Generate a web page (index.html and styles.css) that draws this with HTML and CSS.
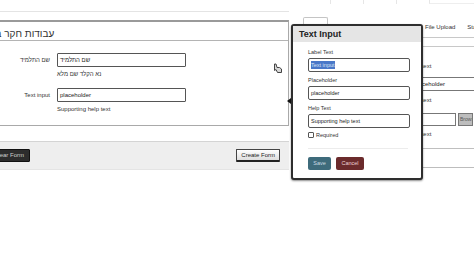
FILE: index.html
```html
<!DOCTYPE html>
<html lang="en">
<head>
<meta charset="utf-8">
<title>Form Builder</title>
<link rel="stylesheet" href="styles.css">
</head>
<body>
<div class="page">
  <div class="left-col">
    <div class="top-rule"></div>
    <section class="panel">
      <header class="panel-head"><span class="panel-title" dir="rtl">עבודות חקר במדעים</span></header>
      <div class="panel-body">
        <div class="row">
          <label class="row-label" dir="rtl">שם התלמיד</label>
          <div class="row-field">
            <div class="input"><span dir="rtl">שם התלמיד</span></div>
            <div class="help"><span dir="rtl">נא הקלד שם מלא</span></div>
          </div>
        </div>
        <div class="row">
          <label class="row-label">Text input</label>
          <div class="row-field">
            <div class="input">placeholder</div>
            <div class="help">Supporting help text</div>
          </div>
        </div>
      </div>
    </section>
    <div class="footer">
      <button class="btn-dark">Clear Form</button>
      <button class="btn-light">Create Form</button>
    </div>
  </div>

  <div class="right-col">
    <div class="strip"><span></span><span></span><span></span><span class="wide"></span></div>
    <div class="tabs">
      <span class="tab active">Text</span>
      <span class="tab">Textarea</span>
      <span class="tab">Select</span>
      <span class="tab">File Upload</span>
      <span class="tab">Static Text</span>
    </div>
    <div class="preview">
      <div class="pv-help">Supporting help text</div>
      <div class="pv-input">placeholder</div>
      <div class="pv-help">Supporting help text</div>
      <div class="pv-file"><div class="pv-file-box"></div><span class="pv-browse">Browse</span></div>
      <div class="pv-help">Supporting help text</div>
    </div>
    <div class="preview-end"></div>
  </div>
</div>

<div class="popover">
  <span class="pop-arrow"></span>
  <div class="pop-head">Text Input</div>
  <div class="pop-body">
    <div class="pop-label">Label Text</div>
    <div class="pop-input"><span class="sel">Text input</span></div>
    <div class="pop-label">Placeholder</div>
    <div class="pop-input">placeholder</div>
    <div class="pop-label">Help Text</div>
    <div class="pop-input">Supporting help text</div>
    <div class="pop-check"><span class="box"></span>Required</div>
    <div class="pop-sep"></div>
    <div class="pop-actions">
      <button class="btn-save">Save</button>
      <button class="btn-cancel">Cancel</button>
    </div>
  </div>
</div>

<svg class="cursor" width="10" height="11" viewBox="0 0 10 11">
  <path d="M1.5 1 L1.5 7.5 L3 6.5 L4.5 9.5 L8.5 9.5 L8.5 6 L6.5 4.5 L4 4.5 L3 1 Z" fill="#d8d8d8" stroke="#444" stroke-width="1" stroke-linejoin="round"/>
</svg>
</body>
</html>
```

FILE: styles.css
```css
* { box-sizing: border-box; }
html, body { margin: 0; padding: 0; }
body {
  width: 474px;
  height: 266px;
  overflow: hidden;
  background: #fff;
  font-family: "Liberation Sans", Arial, sans-serif;
  color: #222;
  position: relative;
}
.page {
  display: flex;
  align-items: flex-start;
}
.left-col {
  width: 329px;
  margin-left: -40px;
  flex: none;
}
.top-rule {
  height: 12px;
  border-bottom: 1px solid #e4e4e4;
  margin-bottom: 8px;
}
.panel {
  border: 1px solid #a9a9a9;
  border-top: 2px solid #9a9a9a;
  border-left: none;
}
.panel-head {
  height: 19px;
  border-bottom: 1px solid #b4b4b4;
  padding-left: 8px;
  line-height: 19px;
  white-space: nowrap;
  overflow: hidden;
}
.panel-title {
  font-family: "Liberation Sans", "DejaVu Sans", sans-serif;
  font-size: 10px;
  color: #333;
  display: inline-block;
}
.panel-body {
  padding: 12px 0 11px 0;
}
.row {
  display: flex;
  gap: 7px;
  margin-bottom: 9px;
}
.row:last-child { margin-bottom: 0; }
.row-label {
  width: 90px;
  text-align: right;
  font-size: 6px;
  line-height: 14px;
  color: #333;
}
.row-field { width: 129px; }
.input {
  height: 14px;
  border: 1px solid #555;
  border-radius: 1px;
  font-size: 6px;
  line-height: 12px;
  padding: 0 2px;
  color: #222;
  text-align: left;
}
.help {
  margin-top: 3px;
  font-size: 6px;
  line-height: 9px;
  color: #333;
  text-align: left;
}
.footer {
  margin-top: 15px;
  height: 29px;
  background: #eeeeee;
  border-top: 1px solid #d4d4d4;
  border-bottom: 1px solid #e4e4e4;
  display: flex;
  align-items: center;
  justify-content: space-between;
  padding: 0 9px 0 28px;
}
.btn-dark, .btn-light {
  font-family: "Liberation Sans", Arial, sans-serif;
  font-size: 6px;
  height: 13px;
  line-height: 11px;
  padding: 0 5px;
  border-radius: 1px;
  margin: 0;
}
.btn-dark {
  background: #2c2c2c;
  color: #cfcfcf;
  border: 1px solid #111;
}
.btn-light {
  background: linear-gradient(#ffffff, #dedede);
  color: #222;
  border: 1px solid #444;
  border-bottom: 2px solid #222;
  padding: 0 4px;
}

.right-col {
  flex: 1;
  margin-left: 12px;
  min-width: 0;
}
.strip {
  height: 4px;
  display: flex;
  padding-left: 29px;
}
.strip span {
  width: 33px;
  border-left: 1px solid #e6e6e6;
}
.strip .wide {
  flex: 1;
  border-bottom: 1px solid #eeeeee;
}
.tabs {
  margin-top: 13px;
  height: 21px;
  display: flex;
  border-bottom: 1px solid #c8c8c8;
  white-space: nowrap;
  padding-left: 2px;
}
.tab {
  font-size: 6px;
  line-height: 21px;
  padding: 0 6px;
  color: #333;
  flex: none;
}
.tab:nth-child(1) { width: 25px; overflow: hidden; }
.tab:nth-child(2) { width: 45px; }
.tab:nth-child(3) { width: 46px; }
.tab.active {
  border: 1px solid #c4c4c4;
  border-bottom-color: #fff;
  border-radius: 2px 2px 0 0;
  line-height: 19px;
}
.preview {
  margin-top: 8px;
  border-top: 1px solid #c8c8c8;
  padding: 15px 0 0 77px;
}
.pv-help {
  font-size: 6px;
  line-height: 9px;
  color: #333;
}
.pv-input {
  margin: 6px 0 5px 33px;
  height: 14px;
  border: 1px solid #777;
  border-right: none;
  font-size: 6px;
  line-height: 12px;
  padding-left: 2px;
}
.pv-file {
  display: flex;
  gap: 2px;
  margin: 8px 0 4px 33px;
  height: 13px;
}
.pv-file-box {
  width: 45px;
  border: 1px solid #777;
}
.pv-browse {
  width: 15px;
  background: #bdbdbd;
  border: 1px solid #777;
  font-size: 5px;
  line-height: 11px;
  padding-left: 1px;
  color: #555;
  overflow: hidden;
  white-space: nowrap;
}
.preview-end {
  margin-top: 9px;
  border-top: 1px solid #bfbfbf;
  height: 20px;
  border-bottom: 1px solid #bdbdbd;
}

.popover {
  position: absolute;
  left: 291px;
  top: 24px;
  width: 132px;
  height: 156px;
  background: #fff;
  border: 2px solid #2e2e2e;
  border-radius: 3px;
  box-shadow: 0 1px 2px rgba(0,0,0,0.45);
}
.pop-arrow {
  position: absolute;
  left: -6px;
  top: 72px;
  width: 0;
  height: 0;
  border-top: 3px solid transparent;
  border-bottom: 3px solid transparent;
  border-right: 4px solid #111;
}
.pop-head {
  height: 16px;
  background: #e5e5e5;
  font-weight: bold;
  font-size: 9px;
  line-height: 16px;
  padding-left: 6px;
  color: #222;
}
.pop-body {
  padding: 0 11px 0 15px;
}
.pop-label {
  font-size: 5.5px;
  line-height: 8px;
  margin-top: 4px;
  color: #333;
}
.pop-label:first-child { margin-top: 6px; }
.pop-input {
  margin-top: 2px;
  height: 14px;
  border: 1px solid #555;
  border-radius: 2px;
  font-size: 5.5px;
  line-height: 12px;
  padding: 0 2px;
  color: #222;
}
.sel {
  background: #4a78c8;
  color: #dfe6f5;
  padding: 1px 0;
}
.pop-check {
  margin-top: 3px;
  height: 8px;
  display: flex;
  align-items: center;
  gap: 2px;
  font-size: 5.5px;
  color: #333;
}
.box {
  width: 6px;
  height: 6px;
  border: 1px solid #555;
  background: #fff;
  border-radius: 1px;
}
.pop-sep {
  margin-top: 9px;
  height: 1px;
  background: #ececec;
  margin-right: 2px;
}
.pop-actions {
  margin-top: 8px;
  display: flex;
  gap: 5px;
}
.btn-save, .btn-cancel {
  height: 13px;
  margin: 0;
  border: none;
  border-radius: 2px;
  font-family: "Liberation Sans", Arial, sans-serif;
  font-size: 5.5px;
  line-height: 13px;
  padding: 0;
}
.btn-save {
  width: 23px;
  background: #3e6b7b;
  color: #c9dbe3;
}
.btn-cancel {
  width: 28px;
  background: #6b2b2c;
  color: #ecd3d3;
}
.cursor {
  position: absolute;
  left: 273px;
  top: 63px;
}
```
